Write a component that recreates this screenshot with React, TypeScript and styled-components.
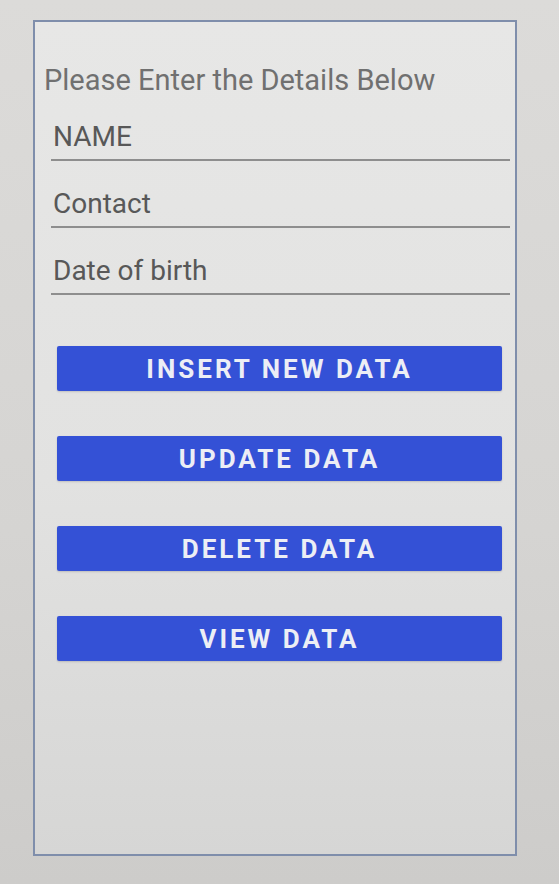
import React from "react";
import styled, { createGlobalStyle } from "styled-components";

const Global = createGlobalStyle`
  html, body {
    margin: 0;
    padding: 0;
    background: #d6d5d3;
  }
  body {
    font-family: Roboto, "Noto Sans", "Liberation Sans", sans-serif;
  }
`;

const Page = styled.div`
  width: 559px;
  height: 884px;
  box-sizing: border-box;
  padding: 20px 42px 0 33px;
  background: linear-gradient(180deg, #dcdbd9 0%, #d5d4d2 60%, #cdccca 100%);
`;

const Card = styled.div`
  box-sizing: border-box;
  height: 836px;
  border: 2px solid #7f8eab;
  background: linear-gradient(180deg, #e7e7e6 0%, #e2e2e1 55%, #d6d6d5 100%);
  padding: 41px 0 0 9px;
  display: flex;
  flex-direction: column;
`;

const Title = styled.div`
  font-size: 29px;
  line-height: 34px;
  color: #707070;
`;

const Fields = styled.div`
  display: flex;
  flex-direction: column;
  gap: 26px;
  margin: 23px 5px 0 7px;
`;

const Field = styled.div`
  font-size: 28px;
  line-height: 33px;
  color: #585858;
  padding: 0 0 6px 2px;
  border-bottom: 2px solid #8e8e8e;
`;

const Buttons = styled.div`
  display: flex;
  flex-direction: column;
  gap: 45px;
  margin: 51px 13px 0 13px;
`;

const Button = styled.button`
  height: 45px;
  border: none;
  border-radius: 2px;
  background: #3451d6;
  color: #eceef5;
  font-family: Roboto, "Noto Sans", "Liberation Sans", sans-serif;
  font-weight: 700;
  font-size: 26px;
  letter-spacing: 3px;
  text-transform: uppercase;
  display: flex;
  align-items: center;
  justify-content: center;
  padding: 0;
  box-shadow: 0 1px 2px rgba(0, 0, 0, 0.15);
`;

export default function App() {
  return (
    <>
      <Global />
      <Page>
        <Card>
          <Title>Please Enter the Details Below</Title>
          <Fields>
            <Field>NAME</Field>
            <Field>Contact</Field>
            <Field>Date of birth</Field>
          </Fields>
          <Buttons>
            <Button>Insert New Data</Button>
            <Button>Update Data</Button>
            <Button>Delete Data</Button>
            <Button>View Data</Button>
          </Buttons>
        </Card>
      </Page>
    </>
  );
}
